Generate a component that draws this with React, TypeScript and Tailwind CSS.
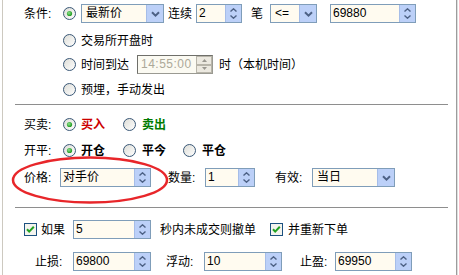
import React from 'react';

function Radio({ checked = false }: { checked?: boolean }) {
  return (
    <svg width="13" height="13" viewBox="0 0 13 13" className="shrink-0">
      <defs>
        <linearGradient id="rbg" x1="0" y1="0" x2="1" y2="1">
          <stop offset="0" stopColor="#dcdcd6" />
          <stop offset="1" stopColor="#ffffff" />
        </linearGradient>
        <radialGradient id="rdot" cx="0.4" cy="0.4" r="0.6">
          <stop offset="0" stopColor="#8fe28f" />
          <stop offset="1" stopColor="#1e9a1e" />
        </radialGradient>
      </defs>
      <circle cx="6.5" cy="6.5" r="6" fill="url(#rbg)" stroke="#3a5877" strokeWidth="1" />
      {checked && <circle cx="6.5" cy="6.5" r="2.6" fill="url(#rdot)" />}
    </svg>
  );
}

function Check() {
  return (
    <svg width="13" height="13" viewBox="0 0 13 13" className="shrink-0">
      <rect x="0.5" y="0.5" width="12" height="12" fill="#f4f4ee" stroke="#1c5180" />
      <path d="M3 6.2 L5.2 8.6 L9.8 3.8" fill="none" stroke="#21a121" strokeWidth="2" />
    </svg>
  );
}

function SpinBtn() {
  return (
    <div className="w-[16px] h-full shrink-0 bg-[#bcd0f8] border-l border-[#a6bde8] flex flex-col items-center justify-center gap-[3px]">
      <svg width="7" height="4" viewBox="0 0 7 4">
        <path d="M0.5 3.5 L3.5 0.8 L6.5 3.5" fill="none" stroke="#4d6185" strokeWidth="1.4" />
      </svg>
      <svg width="7" height="4" viewBox="0 0 7 4">
        <path d="M0.5 0.5 L3.5 3.2 L6.5 0.5" fill="none" stroke="#4d6185" strokeWidth="1.4" />
      </svg>
    </div>
  );
}

function DropBtn() {
  return (
    <div className="w-[17px] h-full shrink-0 bg-[#bcd0f8] border-l border-[#a6bde8] flex items-center justify-center">
      <svg width="9" height="6" viewBox="0 0 9 6">
        <path d="M1 1.2 L4.5 4.6 L8 1.2" fill="none" stroke="#4d6185" strokeWidth="2" />
      </svg>
    </div>
  );
}

function Spin({ value, className }: { value: string; className: string }) {
  return (
    <div className={`h-[19px] shrink-0 flex border border-[#7f9db9] bg-[#fffbf0] ${className}`}>
      <div className="flex-1 pl-[2px] leading-[17px] text-black">{value}</div>
      <SpinBtn />
    </div>
  );
}

function Combo({ value, className }: { value: string; className: string }) {
  return (
    <div className={`h-[19px] shrink-0 flex border border-[#7f9db9] bg-[#fffbf0] ${className}`}>
      <div className="flex-1 pl-[4px] leading-[17px] text-black">{value}</div>
      <DropBtn />
    </div>
  );
}

function DisabledSpin() {
  return (
    <div className="h-[19px] w-[76px] shrink-0 flex border border-[#9a9a92] border-t-[#6f6f6a] border-l-[#6f6f6a] bg-[#fbfaf2]">
      <div className="flex-1 pl-[3px] leading-[17px] text-[#aca899] tracking-[0.5px]">14:55:00</div>
      <div className="w-[16px] h-full flex flex-col">
        <div className="flex-1 bg-[#ece9e0] border border-[#b8b5aa] flex items-center justify-center">
          <svg width="5" height="3" viewBox="0 0 5 3"><path d="M0 3 L2.5 0 L5 3 Z" fill="#9a9890" /></svg>
        </div>
        <div className="flex-1 bg-[#ece9e0] border border-[#b8b5aa] flex items-center justify-center">
          <svg width="5" height="3" viewBox="0 0 5 3"><path d="M0 0 L2.5 3 L5 0 Z" fill="#9a9890" /></svg>
        </div>
      </div>
    </div>
  );
}

export default function App() {
  return (
    <div className="relative w-[459px] h-[275px] bg-white flex text-[12px] text-black font-['Liberation_Sans','Noto_Sans_CJK_SC',sans-serif] overflow-hidden">
      <div className="w-[2px] shrink-0" />
      <div className="w-px shrink-0 bg-[#cdc9c0]" />
      <div className="w-[453px] shrink-0 flex flex-col">
        {/* 条件 */}
        <div className="mt-[4px] h-[19px] flex items-center pl-[21px]">
          <span className="w-[39px] shrink-0">条件:</span>
          <Radio checked />
          <Combo value="最新价" className="ml-[5px] w-[83px]" />
          <span className="w-[32px] shrink-0 pl-[4px]">连续</span>
          <Spin value="2" className="w-[46px]" />
          <span className="ml-[9px] w-[19px] shrink-0">笔</span>
          <Combo value="<=" className="w-[47px]" />
          <Spin value="69880" className="ml-[13px] w-[86px]" />
        </div>
        <div className="mt-[8px] h-[19px] flex items-center pl-[60px]">
          <Radio />
          <span className="ml-[5px]">交易所开盘时</span>
        </div>
        <div className="mt-[5px] h-[19px] flex items-center pl-[60px]">
          <Radio />
          <span className="ml-[5px] w-[56px] shrink-0">时间到达</span>
          <DisabledSpin />
          <span className="ml-[6px]">时（本机时间）</span>
        </div>
        <div className="mt-[6px] h-[19px] flex items-center pl-[60px]">
          <Radio />
          <span className="ml-[5px]">预埋，手动发出</span>
        </div>

        <div className="mt-[5px] ml-[12px] w-[433px] h-px bg-[#8e8e8e]" />

        {/* 买卖 */}
        <div className="mt-[10px] h-[19px] flex items-center pl-[21px]">
          <span className="w-[39px] shrink-0">买卖:</span>
          <Radio checked />
          <span className="ml-[5px] w-[42px] shrink-0 font-bold text-[#cc0000]">买入</span>
          <Radio />
          <span className="ml-[6px] font-bold text-[#007a00]">卖出</span>
        </div>
        <div className="mt-[7px] h-[19px] flex items-center pl-[21px]">
          <span className="w-[39px] shrink-0">开平:</span>
          <Radio checked />
          <span className="ml-[5px] w-[42px] shrink-0 font-bold">开仓</span>
          <Radio />
          <span className="ml-[6px] w-[41px] shrink-0 font-bold">平今</span>
          <Radio />
          <span className="ml-[6px] font-bold">平仓</span>
        </div>
        <div className="mt-[8px] h-[19px] flex items-center pl-[21px]">
          <span className="w-[36px] shrink-0">价格:</span>
          <Spin value="对手价" className="w-[91px]" />
          <span className="ml-[17px] w-[37px] shrink-0">数量:</span>
          <Spin value="1" className="w-[50px]" />
          <span className="ml-[20px] w-[37px] shrink-0">有效:</span>
          <Combo value="当日" className="w-[83px]" />
        </div>

        <div className="mt-[20px] ml-[12px] w-[433px] h-px bg-[#8e8e8e]" />

        {/* 撤单 */}
        <div className="mt-[12px] h-[19px] flex items-center pl-[21px]">
          <Check />
          <span className="ml-[4px] w-[32px] shrink-0">如果</span>
          <Spin value="5" className="w-[78px]" />
          <span className="ml-[9px] w-[110px] shrink-0">秒内未成交则撤单</span>
          <Check />
          <span className="ml-[5px]">并重新下单</span>
        </div>
        <div className="mt-[13px] h-[19px] flex items-center pl-[32px]">
          <span className="w-[38px] shrink-0">止损:</span>
          <Spin value="69800" className="w-[78px]" />
          <span className="ml-[15px] w-[38px] shrink-0">浮动:</span>
          <Spin value="10" className="w-[78px]" />
          <span className="ml-[18px] w-[35px] shrink-0">止盈:</span>
          <Spin value="69950" className="w-[77px]" />
        </div>
      </div>
      <div className="w-px shrink-0 bg-[#9c9c9c]" />
      <div className="w-px shrink-0 bg-[#dedede]" />

      {/* annotation */}
      <svg className="absolute left-0 top-0 pointer-events-none" width="459" height="275">
        <ellipse cx="90" cy="180" rx="77" ry="22.5" fill="none" stroke="#e8262a" strokeWidth="2.5" />
      </svg>
    </div>
  );
}
